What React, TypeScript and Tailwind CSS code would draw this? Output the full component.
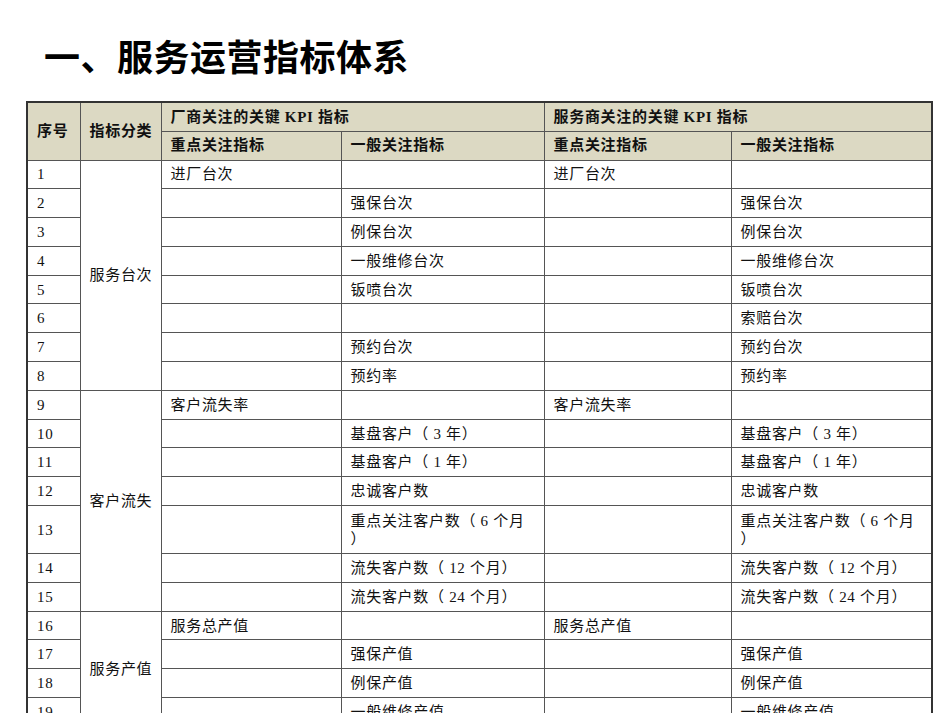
import React from "react";

type Row = {
  no: number;
  cat?: { label: string; span: number };
  a: React.ReactNode;
  b: React.ReactNode;
  c: React.ReactNode;
  d: React.ReactNode;
  tall?: boolean;
};

const both = (no: number, text: React.ReactNode, extra?: Partial<Row>): Row => ({
  no,
  a: "",
  b: text,
  c: "",
  d: text,
  ...extra,
});

const rows: Row[] = [
  { no: 1, cat: { label: "服务台次", span: 8 }, a: "进厂台次", b: "", c: "进厂台次", d: "" },
  both(2, "强保台次"),
  both(3, "例保台次"),
  both(4, "一般维修台次"),
  both(5, "钣喷台次"),
  { no: 6, a: "", b: "", c: "", d: "索赔台次" },
  both(7, "预约台次"),
  both(8, "预约率"),
  { no: 9, cat: { label: "客户流失", span: 7 }, a: "客户流失率", b: "", c: "客户流失率", d: "" },
  both(10, "基盘客户（ 3 年）"),
  both(11, "基盘客户（ 1 年）"),
  both(12, "忠诚客户数"),
  both(
    13,
    <>
      重点关注客户数（ 6 个月
      <br />）
    </>,
    { tall: true }
  ),
  both(14, "流失客户数（ 12 个月）"),
  both(15, "流失客户数（ 24 个月）"),
  { no: 16, cat: { label: "服务产值", span: 4 }, a: "服务总产值", b: "", c: "服务总产值", d: "" },
  both(17, "强保产值"),
  both(18, "例保产值"),
  both(19, "一般维修产值"),
];

const cell = "border border-[#555] px-[9px] align-middle leading-[18px] whitespace-nowrap";
const head =
  "border border-[#555] px-[9px] align-middle text-left font-bold bg-[#dcd9c3] h-[29px] whitespace-nowrap";

export default function App() {
  return (
    <div
      className="w-[950px] h-[713px] overflow-hidden bg-white text-[#111]"
      style={{ fontFamily: '"Liberation Serif", "Noto Sans CJK SC", serif' }}
    >
      <h1
        className="pl-[44px] pt-[37px] text-[36px] leading-[36px] font-bold tracking-[0.5px] text-black"
        style={{ fontFamily: '"Noto Sans CJK SC", sans-serif' }}
      >
        一、服务运营指标体系
      </h1>

      <table className="ml-[26px] mt-[28px] w-[907px] table-fixed border-collapse border-2 border-[#333] text-[15px] tracking-[0.7px]">
        <colgroup>
          <col className="w-[53px]" />
          <col className="w-[81px]" />
          <col className="w-[180px]" />
          <col className="w-[203px]" />
          <col className="w-[187px]" />
          <col className="w-[201px]" />
        </colgroup>
        <thead>
          <tr>
            <th rowSpan={2} className={head}>序号</th>
            <th rowSpan={2} className={head}>指标分类</th>
            <th colSpan={2} className={head}>厂商关注的关键 KPI 指标</th>
            <th colSpan={2} className={head}>服务商关注的关键 KPI 指标</th>
          </tr>
          <tr>
            <th className={head}>重点关注指标</th>
            <th className={head}>一般关注指标</th>
            <th className={head}>重点关注指标</th>
            <th className={head}>一般关注指标</th>
          </tr>
        </thead>
        <tbody>
          {rows.map((r) => (
            <tr key={r.no} className={r.tall ? "h-[48px]" : "h-[28.8px]"}>
              <td className={cell}>{r.no}</td>
              {r.cat && (
                <td rowSpan={r.cat.span} className={cell}>
                  {r.cat.label}
                </td>
              )}
              <td className={cell}>{r.a}</td>
              <td className={cell}>{r.b}</td>
              <td className={cell}>{r.c}</td>
              <td className={cell}>{r.d}</td>
            </tr>
          ))}
        </tbody>
      </table>
    </div>
  );
}
